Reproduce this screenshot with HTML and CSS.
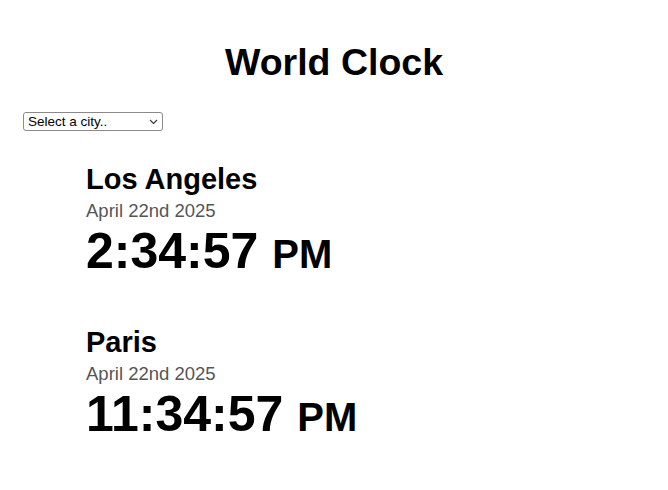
FILE: index.html
```html
<!DOCTYPE html>
<html lang="en">
<head>
<meta charset="utf-8">
<title>World Clock</title>
<link rel="stylesheet" href="styles.css">
</head>
<body>
<h1 class="title">World Clock</h1>
<div class="picker">
  <div class="select-wrap">
    <select class="city-select">
      <option>Select a city..</option>
    </select>
    <svg class="chevron" width="9" height="6" viewBox="0 0 9 6" aria-hidden="true"><path d="M1 1 L4.5 4.5 L8 1" fill="none" stroke="#333" stroke-width="1.1"/></svg>
  </div>
</div>
<div class="cities">
  <section class="city">
    <h2 class="city-name">Los Angeles</h2>
    <div class="city-date">April 22nd 2025</div>
    <div class="city-time">2:34:57 <span class="ampm">PM</span></div>
  </section>
  <section class="city">
    <h2 class="city-name">Paris</h2>
    <div class="city-date">April 22nd 2025</div>
    <div class="city-time">11:34:57 <span class="ampm">PM</span></div>
  </section>
</div>
</body>
</html>
```
FILE: styles.css
```css
html, body {
  margin: 0;
  padding: 0;
  background: #ffffff;
  color: #000000;
  font-family: "Liberation Sans", Arial, sans-serif;
}
.title {
  margin: 0;
  padding-top: 40px;
  font-size: 37.5px;
  line-height: 44px;
  font-weight: 700;
  text-align: center;
}
.picker {
  padding: 28px 0 0 23px;
}
.select-wrap {
  position: relative;
  display: inline-block;
  width: 140px;
  height: 19px;
}
.city-select {
  -webkit-appearance: none;
  appearance: none;
  box-sizing: border-box;
  width: 140px;
  height: 19px;
  margin: 0;
  font-family: "Liberation Sans", Arial, sans-serif;
  font-size: 13.5px;
  line-height: 17px;
  border: 1px solid #8a8a8a;
  border-radius: 3px;
  background: #fff;
  color: #000;
  padding: 0 16px 0 4px;
  display: block;
}
.chevron {
  position: absolute;
  right: 5px;
  top: 7px;
  pointer-events: none;
}
.cities {
  display: flex;
  flex-direction: column;
  gap: 46px;
  padding: 32px 0 0 86px;
}
.city {
  display: flex;
  flex-direction: column;
}
.city-name {
  margin: 0;
  font-size: 29px;
  line-height: 32px;
  font-weight: 700;
}
.city-date {
  margin-top: 5px;
  font-size: 18.5px;
  line-height: 22px;
  color: #555555;
}
.city-time {
  margin-top: 3px;
  font-size: 50px;
  line-height: 52px;
  font-weight: 700;
}
.ampm {
  font-size: 40px;
}
```
